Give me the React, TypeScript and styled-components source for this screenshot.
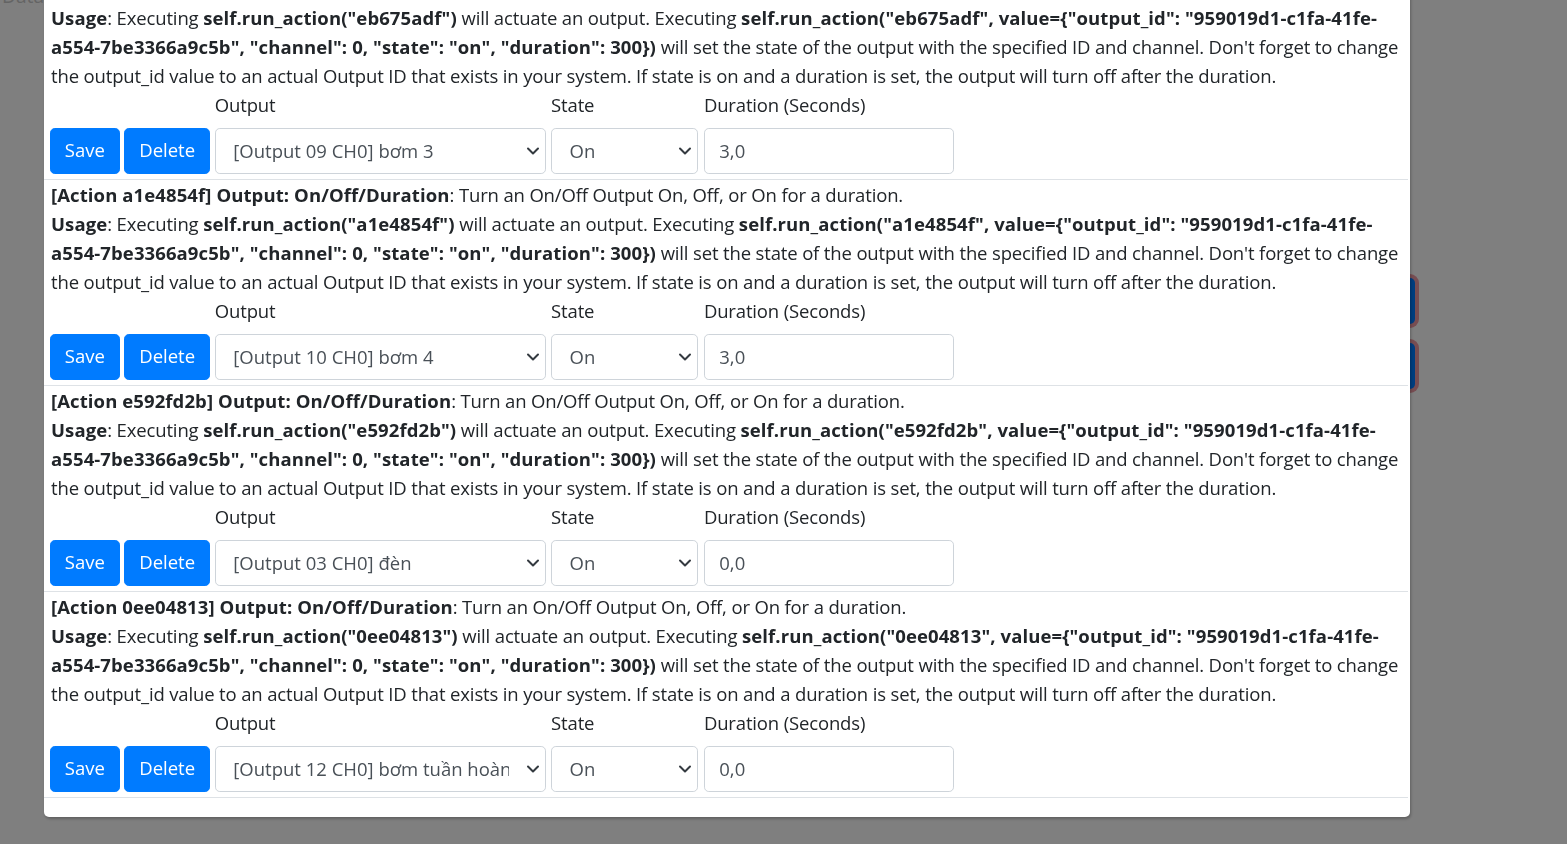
import React from "react";
import styled, { createGlobalStyle } from "styled-components";

const Global = createGlobalStyle`
  html, body { margin: 0; padding: 0; }
  body {
    font-family: "Open Sans", "Noto Sans", sans-serif;
    color: #212529;
    background: #ffffff;
    overflow: hidden;
  }
  * { box-sizing: border-box; }
`;

const FONT_SIZE = "18.5px";
const LINE = "29px";

const Page = styled.div`
  height: 844px;
  display: flex;
  flex-direction: column;
  padding-right: 152px;
`;

const PageTitle = styled.div`
  font-size: 19.2px;
  line-height: 28.8px;
  color: #c8c8c8;
  margin-top: -18px;
  padding-left: 2px;
`;

const SideButtons = styled.div`
  display: flex;
  flex-direction: column;
  align-items: flex-end;
  gap: 19px;
  margin-top: 267px;
`;

const GhostButton = styled.div`
  width: 140px;
  height: 46px;
  background: #007bff;
  border-radius: 5px;
  box-shadow: 0 0 0 4px rgba(238, 150, 160, 0.95);
`;

const Backdrop = styled.div`
  position: fixed;
  inset: 0;
  background: rgba(0, 0, 0, 0.5);
`;

const ModalWrap = styled.div`
  position: fixed;
  inset: 0;
  display: flex;
  flex-direction: column;
  justify-content: flex-end;
  padding: 0 0 27px 44px;
`;

const Modal = styled.div`
  flex-shrink: 0;
  width: 1366px;
  background: #ffffff;
  border-radius: 5px;
  box-shadow: 1px 2px 3px rgba(0, 0, 0, 0.25);
  padding-bottom: 19px;
`;

const Block = styled.div`
  border-bottom: 1px solid #dee2e6;
  margin-right: 2px;
  padding: 0 0 5.5px 7px;
`;

const Desc = styled.p`
  margin: 0;
  font-size: ${FONT_SIZE};
  line-height: ${LINE};
  padding-right: 2px;
  letter-spacing: -0.15px;

  b {
    letter-spacing: 0.1px;
  }
`;

const FormRow = styled.div`
  display: flex;
  align-items: flex-end;
  gap: 4.8px;
  margin-left: -1px;
`;

const Field = styled.div<{ $w: number; $shift?: number }>`
  display: flex;
  flex-direction: column;
  width: ${(p) => p.$w}px;
  margin-left: ${(p) => p.$shift ?? 0}px;
`;

const Label = styled.label`
  font-size: ${FONT_SIZE};
  line-height: ${LINE};
  margin-bottom: 8.5px;
  letter-spacing: -0.15px;
`;

const Button = styled.button<{ $w: number }>`
  width: ${(p) => p.$w}px;
  height: 46px;
  padding: 0;
  background: #007bff;
  border: 1.2px solid #007bff;
  border-radius: 4.8px;
  color: #ffffff;
  font-family: inherit;
  font-size: ${FONT_SIZE};
  line-height: 28.8px;
  cursor: pointer;
`;

const SelectBox = styled.div`
  position: relative;
  width: 100%;
`;

const Select = styled.select`
  width: 100%;
  height: 46px;
  appearance: none;
  -webkit-appearance: none;
  border: 1.2px solid #ced4da;
  border-radius: 4.8px;
  background: #ffffff;
  padding: 0 36px 0 17.5px;
  color: #495057;
  font-family: inherit;
  font-size: ${FONT_SIZE};
`;

const Chevron = styled.svg`
  position: absolute;
  right: 6px;
  top: 50%;
  transform: translateY(-50%);
  width: 14px;
  height: 10px;
  pointer-events: none;
`;

const Input = styled.input`
  width: 100%;
  height: 46px;
  border: 1.2px solid #ced4da;
  border-radius: 4.8px;
  padding: 0 14.4px;
  color: #495057;
  font-family: inherit;
  font-size: ${FONT_SIZE};
`;

type Action = { id: string; output: string; state: string; duration: string };

const actions: Action[] = [
  { id: "eb675adf", output: "[Output 09 CH0] bơm 3", state: "On", duration: "3,0" },
  { id: "a1e4854f", output: "[Output 10 CH0] bơm 4", state: "On", duration: "3,0" },
  { id: "e592fd2b", output: "[Output 03 CH0] đèn", state: "On", duration: "0,0" },
  { id: "0ee04813", output: "[Output 12 CH0] bơm tuần hoàn", state: "On", duration: "0,0" },
];

const ChevronIcon = () => (
  <Chevron viewBox="0 0 14 10" fill="none">
    <path d="M2 2.5l5 5 5-5" stroke="#343a40" strokeWidth="2" strokeLinecap="round" strokeLinejoin="round" />
  </Chevron>
);

const ActionBlock = ({ a }: { a: Action }) => (
  <Block>
    <Desc>
      <b>[Action {a.id}] Output: On/Off/Duration</b>: Turn an On/Off Output On, Off, or On for a duration.
    </Desc>
    <Desc>
      <b>Usage</b>: Executing <b>self.run_action("{a.id}")</b> will actuate an output. Executing{" "}
      <b>
        self.run_action("{a.id}", value={"{"}"output_id": "959019d1-c1fa-41fe-a554-7be3366a9c5b", "channel": 0,
        "state": "on", "duration": 300{"}"})
      </b>{" "}
      will set the state of the output with the specified ID and channel. Don't forget to change the output_id value
      to an actual Output ID that exists in your system. If state is on and a duration is set, the output will turn
      off after the duration.
    </Desc>
    <FormRow>
      <Button $w={69.6}>Save</Button>
      <Button $w={85.6}>Delete</Button>
      <Field $w={331.5}>
        <Label>Output</Label>
        <SelectBox>
          <Select defaultValue={a.output}>
            <option>{a.output}</option>
          </Select>
          <ChevronIcon />
        </SelectBox>
      </Field>
      <Field $w={147}>
        <Label>State</Label>
        <SelectBox>
          <Select defaultValue={a.state}>
            <option>On</option>
            <option>Off</option>
          </Select>
          <ChevronIcon />
        </SelectBox>
      </Field>
      <Field $w={250} $shift={1}>
        <Label>Duration (Seconds)</Label>
        <Input defaultValue={a.duration} />
      </Field>
    </FormRow>
  </Block>
);

export default function App() {
  return (
    <>
      <Global />
      <Page>
        <PageTitle>Data</PageTitle>
        <SideButtons>
          <GhostButton />
          <GhostButton />
        </SideButtons>
      </Page>
      <Backdrop />
      <ModalWrap>
        <Modal>
          {actions.map((a) => (
            <ActionBlock key={a.id} a={a} />
          ))}
        </Modal>
      </ModalWrap>
    </>
  );
}
